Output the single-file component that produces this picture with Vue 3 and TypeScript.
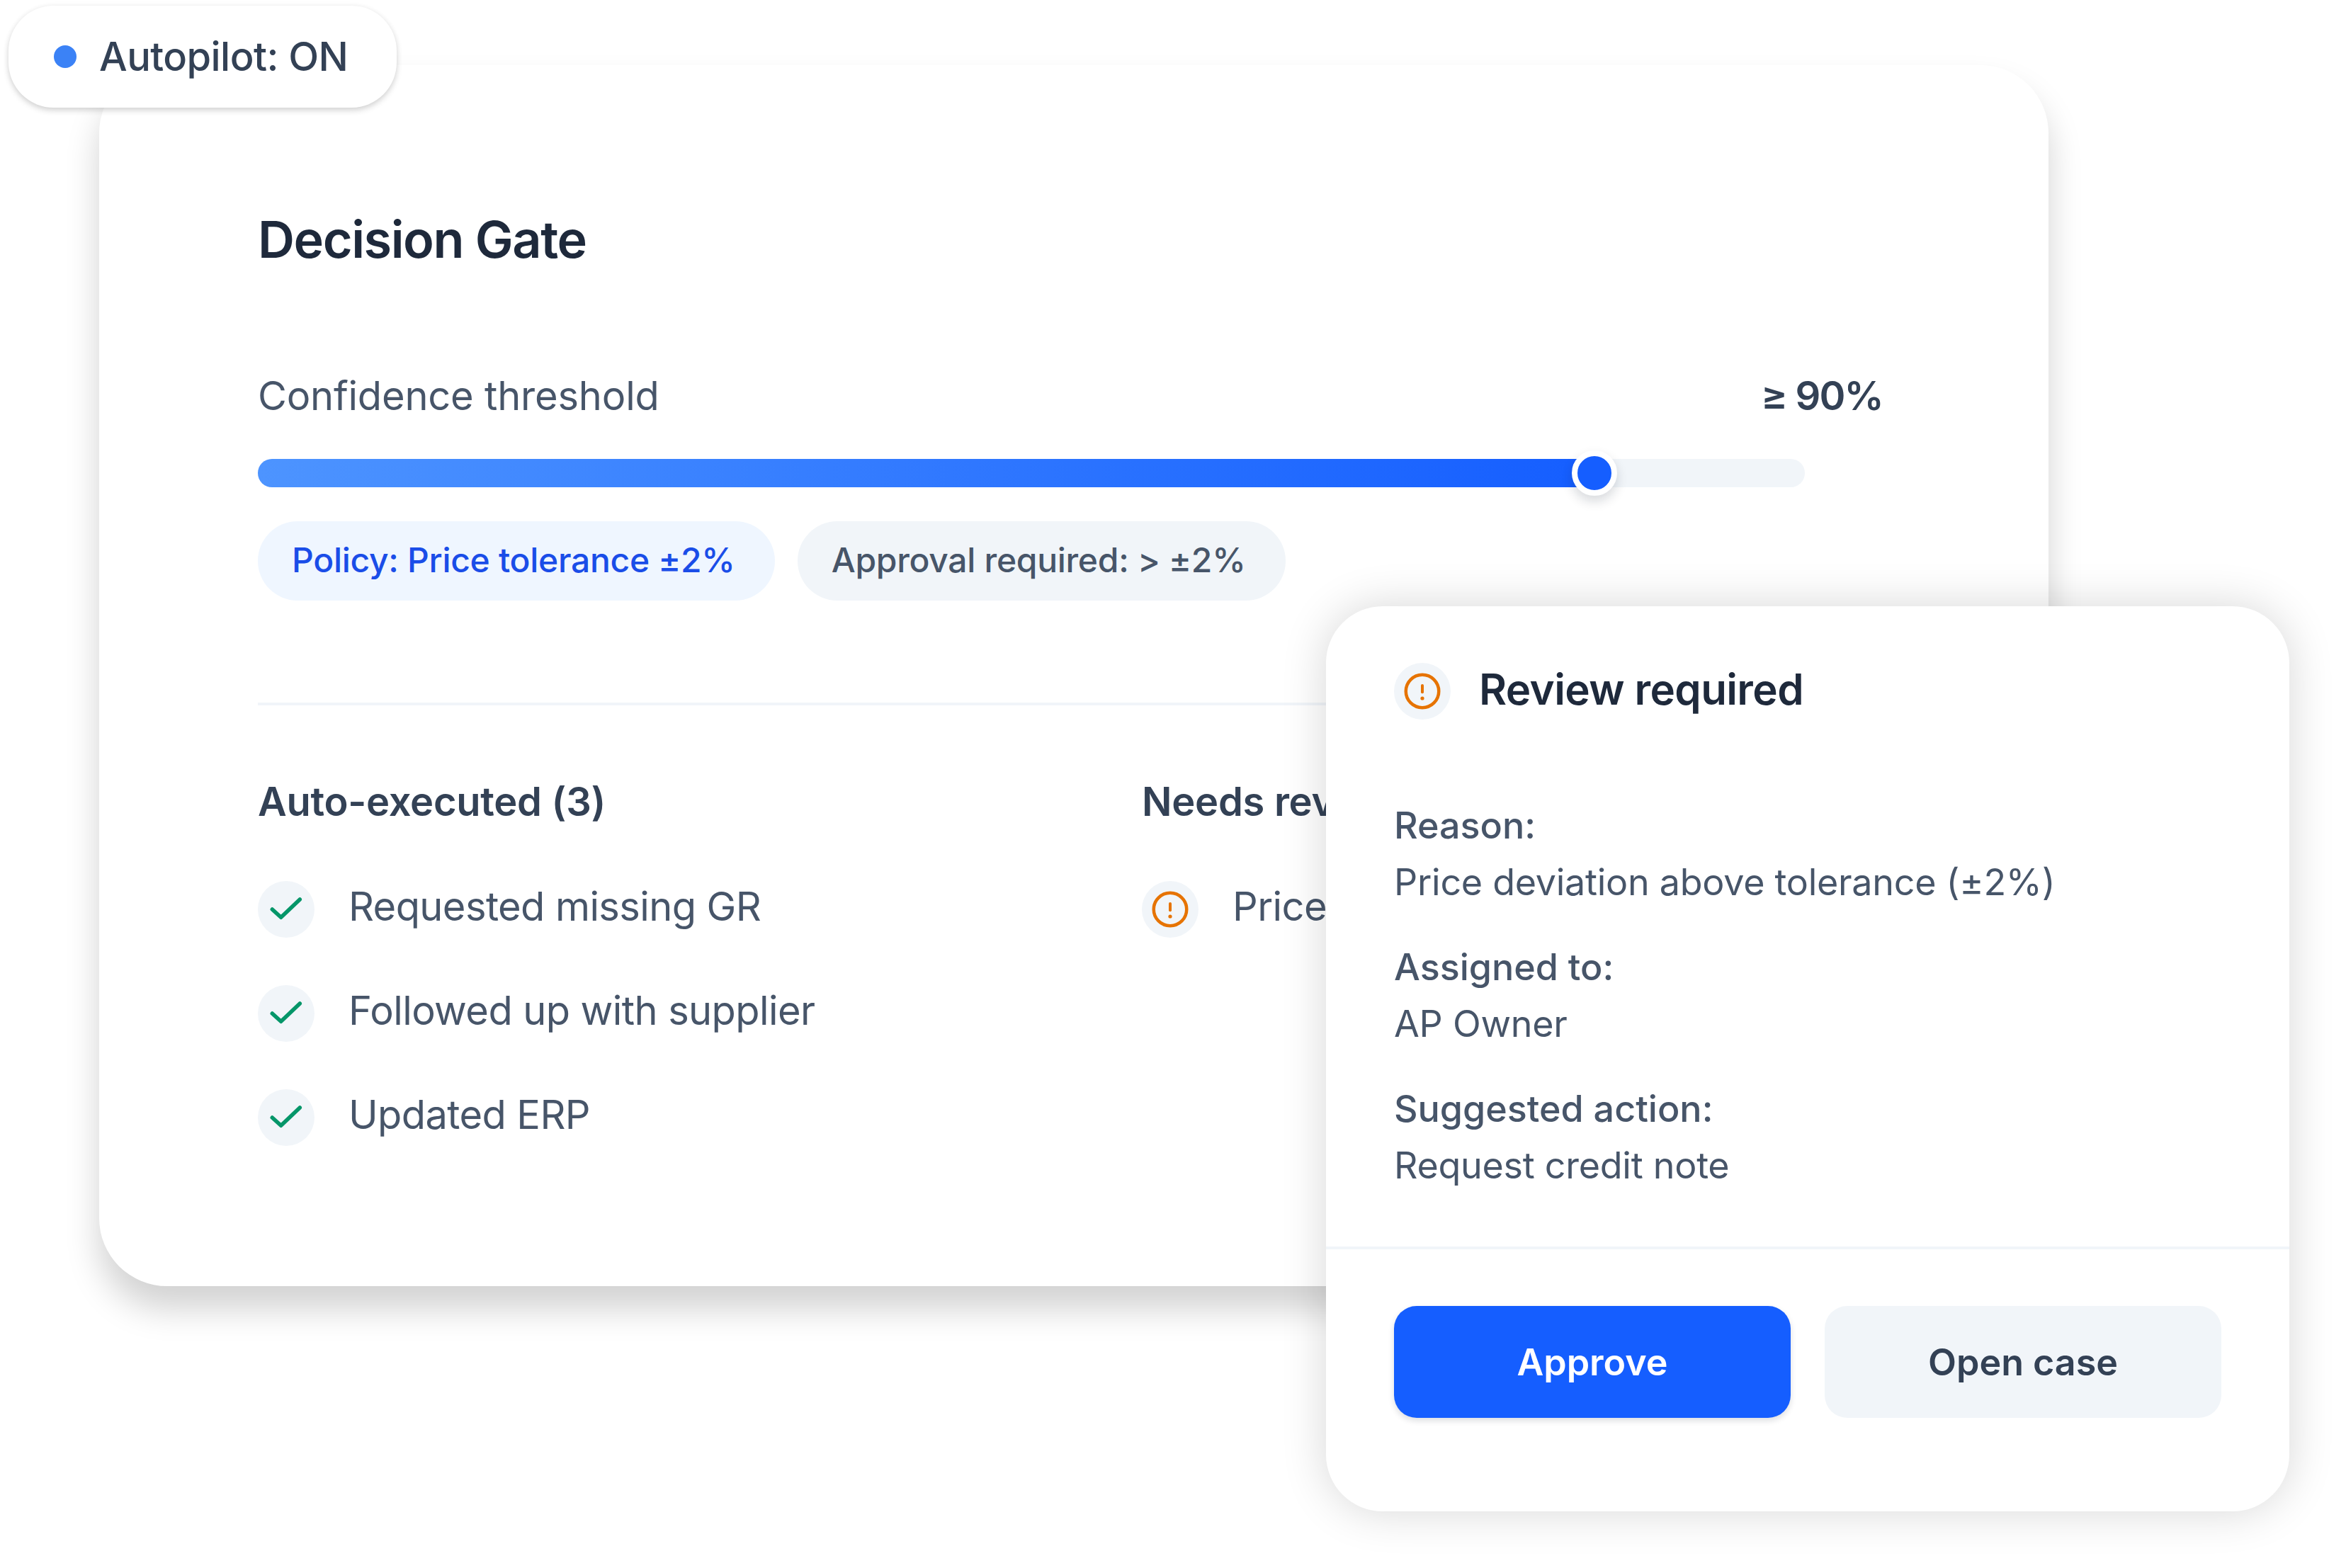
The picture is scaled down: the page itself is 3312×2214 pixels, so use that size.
<template>
  <div class="stage">
    <div class="card">
      <h1 class="title">Decision Gate</h1>

      <div class="threshold-row">
        <span class="threshold-label">Confidence threshold</span>
        <span class="threshold-value">≥ 90%</span>
      </div>
      <div class="track">
        <div class="fill" :style="{ width: confidence + '%' }">
          <span class="thumb"></span>
        </div>
      </div>

      <div class="chips">
        <span class="chip chip-blue">Policy: Price tolerance ±2%</span>
        <span class="chip chip-grey">Approval required: &gt; ±2%</span>
      </div>

      <div class="card-rule"></div>

      <div class="columns">
        <div class="column">
          <h2 class="column-title">Auto-executed (3)</h2>
          <ul class="items">
            <li v-for="item in autoExecuted" :key="item" class="item">
              <span class="icon-badge">
                <svg width="56" height="56" viewBox="0 0 56 56" fill="none">
                  <path d="M8.300 28 L20.700 39.300 L47.300 14" stroke="#059669" stroke-width="5.500" stroke-linecap="round" stroke-linejoin="round" />
                </svg>
              </span>
              <span class="item-label">{{ item }}</span>
            </li>
          </ul>
        </div>
        <div class="column">
          <h2 class="column-title">Needs review (1)</h2>
          <ul class="items">
            <li class="item">
              <span class="icon-badge">
                <svg width="52" height="52" viewBox="0 0 52 52" fill="none">
                  <circle cx="26" cy="26" r="23.250" stroke="#e67300" stroke-width="4.500" />
                  <path d="M26 18 V27.300" stroke="#e67300" stroke-width="4" stroke-linecap="round" />
                  <circle cx="26" cy="36" r="2.600" fill="#e67300" />
                </svg>
              </span>
              <span class="item-label">Price deviation</span>
            </li>
          </ul>
        </div>
      </div>
    </div>

    <div class="pill">
      <span class="pill-dot"></span>
      <span>Autopilot: ON</span>
    </div>

    <div class="review">
      <div class="review-body">
        <div class="review-head">
          <span class="icon-badge">
            <svg width="52" height="52" viewBox="0 0 52 52" fill="none">
              <circle cx="26" cy="26" r="23.250" stroke="#e67300" stroke-width="4.500" />
              <path d="M26 18 V27.300" stroke="#e67300" stroke-width="4" stroke-linecap="round" />
              <circle cx="26" cy="36" r="2.600" fill="#e67300" />
            </svg>
          </span>
          <h3 class="review-title">Review required</h3>
        </div>
        <dl class="facts">
          <div v-for="fact in facts" :key="fact.label" class="fact">
            <dt>{{ fact.label }}</dt>
            <dd>{{ fact.value }}</dd>
          </div>
        </dl>
      </div>
      <div class="review-actions">
        <button class="btn btn-primary">Approve</button>
        <button class="btn btn-secondary">Open case</button>
      </div>
    </div>
  </div>
</template>

<script setup lang="ts">
const confidence = 86.4

const autoExecuted: string[] = ['Requested missing GR', 'Followed up with supplier', 'Updated ERP']

const facts: { label: string; value: string }[] = [
  { label: 'Reason:', value: 'Price deviation above tolerance (±2%)' },
  { label: 'Assigned to:', value: 'AP Owner' },
  { label: 'Suggested action:', value: 'Request credit note' },
]
</script>

<style>
html,
body {
  background: #fff;
}
</style>

<style scoped>
.stage {
  position: relative;
  width: 3312px;
  height: 2214px;
  background: #fff;
  overflow: hidden;
  font-family: Inter, "Liberation Sans", sans-serif;
  color: #475569;
}

.card {
  position: absolute;
  left: 140px;
  top: 92px;
  width: 2752px;
  height: 1724px;
  box-sizing: border-box;
  padding: 202px 224px 0;
  background: #fff;
  border-radius: 96px;
  box-shadow: 0 32px 48px rgba(0, 0, 0, 0.18);
}

.title {
  margin: 0;
  font-size: 72px;
  line-height: 88px;
  font-weight: 600;
  letter-spacing: -1.44px;
  color: #1e293b;
}

.threshold-row {
  display: flex;
  justify-content: space-between;
  margin-top: 137px;
  width: 2294px;
  font-size: 56px;
  line-height: 80px;
  letter-spacing: -0.2px;
}

.threshold-value {
  font-weight: 600;
  letter-spacing: -1.8px;
  color: #334155;
}

.track {
  width: 2184px;
  height: 40px;
  margin-top: 49px;
  border-radius: 20px;
  background: #f1f5f9;
}

.fill {
  position: relative;
  height: 100%;
  border-radius: 20px 0 0 20px;
  background: linear-gradient(90deg, #4d94ff, #155eff);
}

.thumb {
  position: absolute;
  right: -32px;
  top: -12px;
  width: 48px;
  height: 48px;
  border: 8px solid #fff;
  border-radius: 50%;
  background: #155eff;
  box-shadow: 0 8px 16px rgba(15, 23, 42, 0.16);
}

.chips {
  display: flex;
  gap: 32px;
  margin-top: 48px;
}

.chip {
  height: 112px;
  box-sizing: border-box;
  display: flex;
  align-items: center;
  padding: 0 56px 3px 48px;
  border-radius: 56px;
  font-size: 48px;
  font-weight: 500;
  letter-spacing: -0.3px;
}

.chip-blue {
  background: #eff6ff;
  color: #1a4de8;
}

.chip-grey {
  background: #f1f5f9;
  color: #475569;
}

.card-rule {
  height: 4px;
  margin-top: 144px;
  background: #f1f5f9;
}

.columns {
  display: grid;
  grid-template-columns: 1248px 260px;
  margin-top: 98px;
}

.column {
  overflow: hidden;
}

.column-title {
  margin: 0;
  font-size: 56px;
  line-height: 76px;
  font-weight: 600;
  letter-spacing: -0.28px;
  white-space: nowrap;
  color: #334155;
}

.items {
  list-style: none;
  margin: 74px 0 0;
  padding: 0;
  display: flex;
  flex-direction: column;
  gap: 67px;
}

.item {
  display: flex;
  align-items: center;
  gap: 48px;
  font-size: 56px;
  letter-spacing: -0.6px;
  white-space: nowrap;
}

.item-label {
  padding-bottom: 8px;
}

.icon-badge {
  width: 80px;
  height: 80px;
  flex: none;
  display: flex;
  align-items: center;
  justify-content: center;
  border-radius: 50%;
  background: #f1f5f9;
}

.pill {
  position: absolute;
  left: 12px;
  top: 8px;
  width: 548px;
  height: 144px;
  box-sizing: border-box;
  display: flex;
  align-items: center;
  gap: 32px;
  padding-left: 64px;
  background: #fff;
  border-radius: 64px;
  font-size: 56px;
  font-weight: 500;
  letter-spacing: -0.56px;
  color: #334155;
  box-shadow: 0 4px 8px rgba(0, 0, 0, 0.16), 0 0 8px rgba(0, 0, 0, 0.04);
}

.pill-dot {
  width: 32px;
  height: 32px;
  border-radius: 50%;
  background: #3b82f6;
}

.review {
  position: absolute;
  left: 1872px;
  top: 856px;
  width: 1360px;
  height: 1278px;
  display: flex;
  flex-direction: column;
  background: #fff;
  border-radius: 80px;
  box-shadow: 0 0 64px rgba(0, 0, 0, 0.16);
}

.review-body {
  flex: 1;
  padding: 80px 96px 0;
  border-bottom: 4px solid #f1f5f9;
}

.review-head {
  display: flex;
  align-items: center;
  gap: 40px;
}

.review-title {
  margin: 0 0 6px;
  font-size: 60px;
  line-height: 70px;
  font-weight: 600;
  letter-spacing: -0.6px;
  color: #1e293b;
}

.facts {
  margin: 110px 0 0;
  display: flex;
  flex-direction: column;
  gap: 40px;
}

.fact {
  font-size: 52px;
  line-height: 80px;
}

.fact dt {
  font-weight: 500;
}

.fact dd {
  margin: 0;
  letter-spacing: -0.27px;
}

.review-actions {
  display: grid;
  grid-template-columns: 1fr 1fr;
  gap: 48px;
  padding: 80px 96px 132px;
}

.btn {
  height: 158px;
  border: 0;
  border-radius: 32px;
  font-family: inherit;
  font-size: 52px;
  font-weight: 600;
}

.btn-primary {
  background: #155eff;
  color: #fff;
  box-shadow: 0 4px 8px rgba(15, 23, 42, 0.14);
}

.btn-secondary {
  background: #f1f5f9;
  color: #334155;
}
</style>
